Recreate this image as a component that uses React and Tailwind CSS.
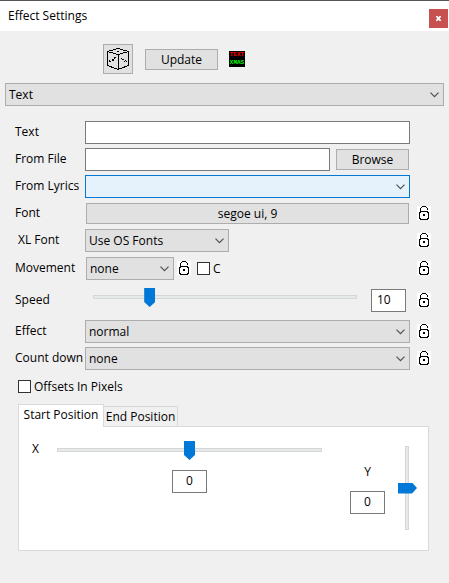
import { useState } from "react";
import clsx from "clsx";

const sliderH =
  "block h-5 w-full appearance-none bg-transparent outline-none [&::-webkit-slider-runnable-track]:h-1 [&::-webkit-slider-runnable-track]:border [&::-webkit-slider-runnable-track]:border-[#d6d6d6] [&::-webkit-slider-runnable-track]:bg-[#e7eaea] [&::-webkit-slider-thumb]:mt-[-8px] [&::-webkit-slider-thumb]:h-[19px] [&::-webkit-slider-thumb]:w-[11px] [&::-webkit-slider-thumb]:appearance-none [&::-webkit-slider-thumb]:bg-[#0078d7] [&::-webkit-slider-thumb]:[clip-path:polygon(0_0,100%_0,100%_74%,50%_100%,0_74%)]";
const sliderV =
  "block h-[84px] w-5 appearance-none bg-transparent outline-none [writing-mode:vertical-lr] [&::-webkit-slider-runnable-track]:w-1 [&::-webkit-slider-runnable-track]:border [&::-webkit-slider-runnable-track]:border-[#d6d6d6] [&::-webkit-slider-runnable-track]:bg-[#e7eaea] [&::-webkit-slider-thumb]:ml-[-8px] [&::-webkit-slider-thumb]:h-[11px] [&::-webkit-slider-thumb]:w-[19px] [&::-webkit-slider-thumb]:appearance-none [&::-webkit-slider-thumb]:bg-[#0078d7] [&::-webkit-slider-thumb]:[clip-path:polygon(0_0,74%_0,100%_50%,74%_100%,0_100%)]";
const button = "border border-[#adadad] bg-[#e1e1e1] text-center";
const field = "h-[23px] rounded-none border border-[#7a7a7a] bg-white pb-[2px] outline-none";
const checkbox =
  "size-[13px] shrink-0 appearance-none border border-[#333333] bg-white checked:bg-[#0078d7]";

function Select({ id, label, options, className, active }) {
  return (
    <div className={clsx("relative h-[23px]", className)}>
      <select
        id={id}
        aria-label={label}
        className={clsx(
          "block h-full w-full appearance-none rounded-none border pr-5 pl-[3px] outline-none",
          active ? "border-[#0078d7] bg-[#e5f1fb]" : "border-[#adadad] bg-[#e1e1e1]"
        )}
      >
        {options.map((o) => (
          <option key={o}>{o}</option>
        ))}
      </select>
      <svg
        className="pointer-events-none absolute top-[9px] right-[5px]"
        width="9"
        height="6"
        viewBox="0 0 9 6"
        fill="none"
        stroke="#505050"
        strokeWidth="1.2"
      >
        <path d="M.5 .7 4.5 4.7 8.5 .7" />
      </svg>
    </div>
  );
}

function Lock({ label }) {
  return (
    <button aria-label={`Lock ${label}`} className="mb-px block size-[14px] shrink-0 bg-white">
      <svg width="14" height="14" viewBox="0 0 14 14" fill="none" stroke="#000" shapeRendering="crispEdges">
        <path d="M3 5.5H11M3 13.5H11M2.5 6V13M11.5 6V13M3.5 2V5M4 1.5H5M5 .5H9M9 1.5H10M10.5 2V4" />
        <path d="M6 8h2v2H6zM3 6h1v1H3zM10 6h1v1h-1zM3 12h1v1H3zM10 12h1v1h-1z" fill="#000" stroke="none" />
      </svg>
    </button>
  );
}

function Row({ label, id, lock, indent, className, children }) {
  return (
    <div className={clsx("flex items-center", className || "h-[23px]")}>
      <label
        htmlFor={id}
        className={clsx("w-[70px] shrink-0 pb-[2px] whitespace-nowrap", indent && "pl-[3px]")}
      >
        {label}
      </label>
      <div className="flex min-w-0 flex-1 items-center">{children}</div>
      <div className="ml-[7px] w-[14px] shrink-0">{lock && <Lock label={label} />}</div>
    </div>
  );
}

function DiceIcon() {
  return (
    <svg width="22" height="22" viewBox="0 0 22 22" fill="none" stroke="#000" shapeRendering="crispEdges">
      <path d="M11 .5.5 3.5V17.5L11 21.5 21.5 17.5V3.5L11 .5M.5 3.5 11 6.5 21.5 3.5M11.5 6.5V21.5" />
      <path
        fill="#000"
        stroke="none"
        d="M10 3h2v1h-2zM7 9h2v1H7zM7 10h1v1H7zM5 11h2v2H5zM2 13h2v1H2zM2 12h1v1H2zM14 10h1v1h-1zM15 11h2v1h-2zM17 13h1v1h-1zM18 12h1v1h-1zM19 13h1v1h-1z"
      />
    </svg>
  );
}

export default function App() {
  const [tab, setTab] = useState("start");
  return (
    <div className="min-h-screen bg-[#f0f0f0] font-['Open_Sans','Noto_Sans',sans-serif] text-[12px] leading-4 text-black">
      <header className="flex h-[31px] items-center justify-between border-t border-[#555555] bg-white pr-px pl-2">
        <h1>Effect Settings</h1>
        <button aria-label="Close" className="mt-1 flex size-[19px] items-center justify-center bg-[#c75050]">
          <svg width="5" height="5" viewBox="0 0 5 5" stroke="#fff" strokeWidth="1.7">
            <path d="M.3 0 4.7 5M4.7 0 .3 5" />
          </svg>
        </button>
      </header>

      <div className="mt-[13px] flex items-center pl-[103px]">
        <button aria-label="Random" className={clsx(button, "flex size-[30px] items-center justify-center")}>
          <DiceIcon />
        </button>
        <button className={clsx(button, "mt-px ml-3 h-[21px] w-[73px]")}>Update</button>
        <div className="ml-[11px] size-4 overflow-hidden bg-black text-center font-['Liberation_Mono',monospace] text-[6px] leading-[8px] font-bold">
          <div className="text-[#ff0000]">TEXT</div>
          <div className="text-[#00ff00]">XMAS</div>
        </div>
      </div>

      <Select label="Effect type" options={["Text"]} className="mt-[9px] mr-[5px] ml-[5px]" />

      <div className="mt-[15px] flex flex-col gap-1 pr-[18px] pl-[15px]">
        <Row label="Text" id="text">
          <input id="text" type="text" className={clsx(field, "w-full px-1")} />
        </Row>
        <Row label="From File" id="file">
          <input id="file" type="text" className={clsx(field, "min-w-0 flex-1 px-1")} />
          <button className={clsx(button, "mr-px ml-[6px] h-[21px] w-[73px]")}>Browse</button>
        </Row>
        <Row label="From Lyrics" id="lyrics">
          <Select id="lyrics" options={[""]} className="w-full" active />
        </Row>
        <Row label="Font" id="font" lock>
          <button id="font" className={clsx(button, "mx-px h-[21px] flex-1")}>
            segoe ui, 9
          </button>
        </Row>
        <Row label="XL Font" id="xlfont" lock indent>
          <Select id="xlfont" options={["Use OS Fonts"]} className="w-[144px]" />
        </Row>
        <Row label="Movement" id="movement" lock className="h-[25px]">
          <Select id="movement" options={["none"]} className="ml-px w-[88px]" />
          <div className="ml-[3px]">
            <Lock label="movement direction" />
          </div>
          <label className="ml-[6px] flex items-center gap-[3px]">
            <input type="checkbox" className={checkbox} />C
          </label>
        </Row>
        <Row label="Speed" id="speed" lock className="h-[31px]">
          <div className="ml-2 min-w-0 flex-1 pb-[7px]">
            <input id="speed" type="range" min="0" max="50" defaultValue="10" className={sliderH} />
          </div>
          <input
            type="text"
            aria-label="Speed value"
            defaultValue="10"
            className={clsx(field, "mr-1 ml-[14px] w-[35px] pl-[5px]")}
          />
        </Row>
        <Row label="Effect" id="effect" lock>
          <Select id="effect" options={["normal"]} className="w-full" />
        </Row>
        <Row label="Count down" id="countdown" lock>
          <Select id="countdown" options={["none"]} className="w-full" />
        </Row>
      </div>

      <label className="mt-2 ml-[18px] flex h-[17px] w-fit items-center gap-[3px]">
        <input type="checkbox" className={checkbox} />
        Offsets In Pixels
      </label>

      <div className="mt-[9px] mr-5 ml-[18px] pb-8">
        <div role="tablist" className="flex items-end">
          <button
            role="tab"
            aria-selected={tab === "start"}
            onClick={() => setTab("start")}
            className="z-10 -mb-px h-[23px] w-[86px] border border-b-0 border-[#d9d9d9] bg-white pb-[2px] whitespace-nowrap"
          >
            Start Position
          </button>
          <button
            role="tab"
            aria-selected={tab === "end"}
            onClick={() => setTab("end")}
            className="-ml-px h-[20px] w-[75px] border border-b-0 border-[#d9d9d9] bg-[#f0f0f0] whitespace-nowrap"
          >
            End Position
          </button>
        </div>
        <div role="tabpanel" className="flex h-[125px] border border-[#d9d9d9] bg-white pr-[11px] pl-[13px]">
          <label htmlFor="x" className="mt-[14px] w-[25px] shrink-0">
            X
          </label>
          <div className="mt-[13px] flex min-w-0 flex-1 flex-col items-center">
            <input id="x" type="range" defaultValue="50" className={sliderH} />
            <input
              type="text"
              aria-label="X value"
              defaultValue="0"
              className={clsx(field, "mt-[10px] w-[35px] text-center")}
            />
          </div>
          <div className="mt-[37px] ml-7 flex flex-col items-center">
            <label htmlFor="y">Y</label>
            <input
              type="text"
              aria-label="Y value"
              defaultValue="0"
              className={clsx(field, "mt-[11px] w-[35px] text-center")}
            />
          </div>
          <div className="mt-[19px] ml-3">
            <input id="y" type="range" defaultValue="50" className={sliderV} />
          </div>
        </div>
      </div>
    </div>
  );
}
